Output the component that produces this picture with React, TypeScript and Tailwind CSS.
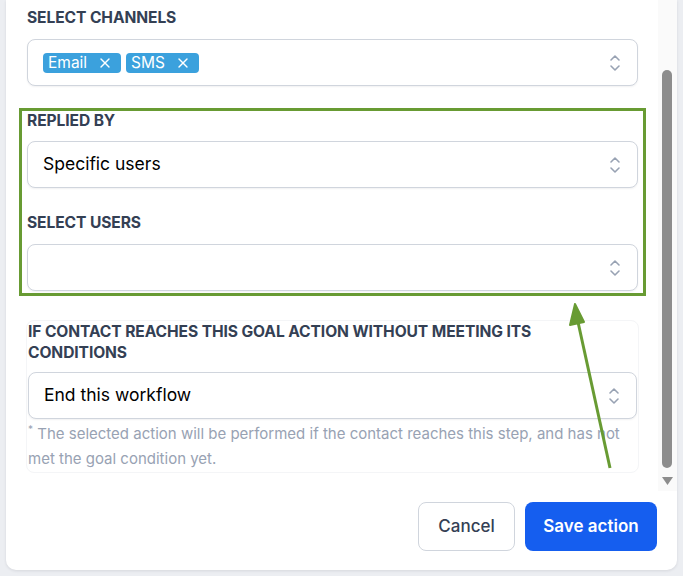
import { X } from 'lucide-react';

function UpDown() {
  return (
    <svg width="12" height="20" viewBox="0 0 12 20" fill="none" stroke="#98a2b3" strokeWidth="1.6" strokeLinecap="round" strokeLinejoin="round">
      <path d="M2 7 L6 3 L10 7" />
      <path d="M2 13 L6 17 L10 13" />
    </svg>
  );
}

function Label({ children }: { children: React.ReactNode }) {
  return (
    <div className="max-w-[580px] text-[15.6px] font-bold uppercase leading-[21px] tracking-[-0.1px] text-[#344054]">{children}</div>
  );
}

function SelectBox({ children }: { children?: React.ReactNode }) {
  return (
    <div className="flex h-[47px] items-center justify-between rounded-[8px] border border-[#d0d5dd] bg-white pl-[15px] pr-[16px] shadow-[0_1px_2px_rgba(16,24,40,0.06)]">
      <div className="flex items-center gap-[5px] text-[17.5px] text-black">{children}</div>
      <UpDown />
    </div>
  );
}

function Chip({ text }: { text: string }) {
  return (
    <span className="flex h-[20px] items-center gap-[10px] rounded-[4px] bg-[#3ba1dd] pl-[5px] pr-[8px] text-[15.5px] leading-none text-white">
      {text}
      <X className="h-[16px] w-[16px]" strokeWidth={2} />
    </span>
  );
}

export default function App() {
  return (
    <div className="h-[576px] w-[683px] overflow-hidden bg-[#eceef2] pl-[6px] pr-[6px]" style={{ fontFamily: 'Inter, "Noto Sans", sans-serif' }}>
      <div className="relative flex h-[570px] flex-col rounded-b-[10px] bg-white shadow-[0_1px_3px_rgba(16,24,40,0.1)]">
        <div className="flex h-[491px]">
          <div className="flex-1 pl-[21px] pr-[20px] pt-[7px]">
            <Label>Select channels</Label>
            <div className="mt-[11px]">
              <SelectBox>
                <Chip text="Email" />
                <Chip text="SMS" />
              </SelectBox>
            </div>
            <div className="mt-[24px]">
              <Label>Replied by</Label>
            </div>
            <div className="mt-[10px]">
              <SelectBox>Specific users</SelectBox>
            </div>
            <div className="mt-[24px]">
              <Label>Select users</Label>
            </div>
            <div className="mt-[11px]">
              <SelectBox />
            </div>
            <div className="mt-[29px] -mx-[1px] rounded-[8px] border border-[#f4f5f7] px-[1px] pb-[1px]">
              <Label>If contact reaches this goal action without meeting its conditions</Label>
              <div className="mt-[9px]">
                <SelectBox>End this workflow</SelectBox>
              </div>
              <p className="pt-[2px] text-[15px] leading-[25px] text-[#98a2b3]">
                <span className="align-top text-[10px] leading-[16px]">*</span> The selected action will be performed if the contact reaches this step, and has not met the goal condition yet.
              </p>
            </div>
          </div>
          <div className="flex w-[19px] flex-col items-center bg-[#fafafa] pr-[1px]">
            <div className="mt-[70px] h-[398px] w-[10px] rounded-full bg-[#8d8d8d]" />
            <svg className="mt-[9px]" width="11" height="8" viewBox="0 0 11 8">
              <path d="M0 0 H11 L5.5 8 Z" fill="#8d8d8d" />
            </svg>
          </div>
        </div>
        <div className="flex justify-end gap-[10px] pr-[20px] pt-[11px]">
          <button className="h-[49px] w-[97px] rounded-[8px] border border-[#d0d5dd] bg-white text-[17px] font-medium text-[#344054]">
            Cancel
          </button>
          <button className="h-[49px] w-[132px] rounded-[8px] bg-[#155eef] text-[17px] font-semibold text-white">
            Save action
          </button>
        </div>

        <div className="pointer-events-none absolute left-[13px] top-[108px] h-[188px] w-[627px] border-[3px] border-[#689b33]" />
        <svg className="pointer-events-none absolute left-0 top-0" width="671" height="570">
          <line x1="604" y1="468" x2="572" y2="322" stroke="#689b33" strokeWidth="3" />
          <path d="M569 304 L564 325 L578 322 Z" fill="#689b33" stroke="#689b33" strokeWidth="2" strokeLinejoin="round" />
        </svg>
      </div>
    </div>
  );
}
